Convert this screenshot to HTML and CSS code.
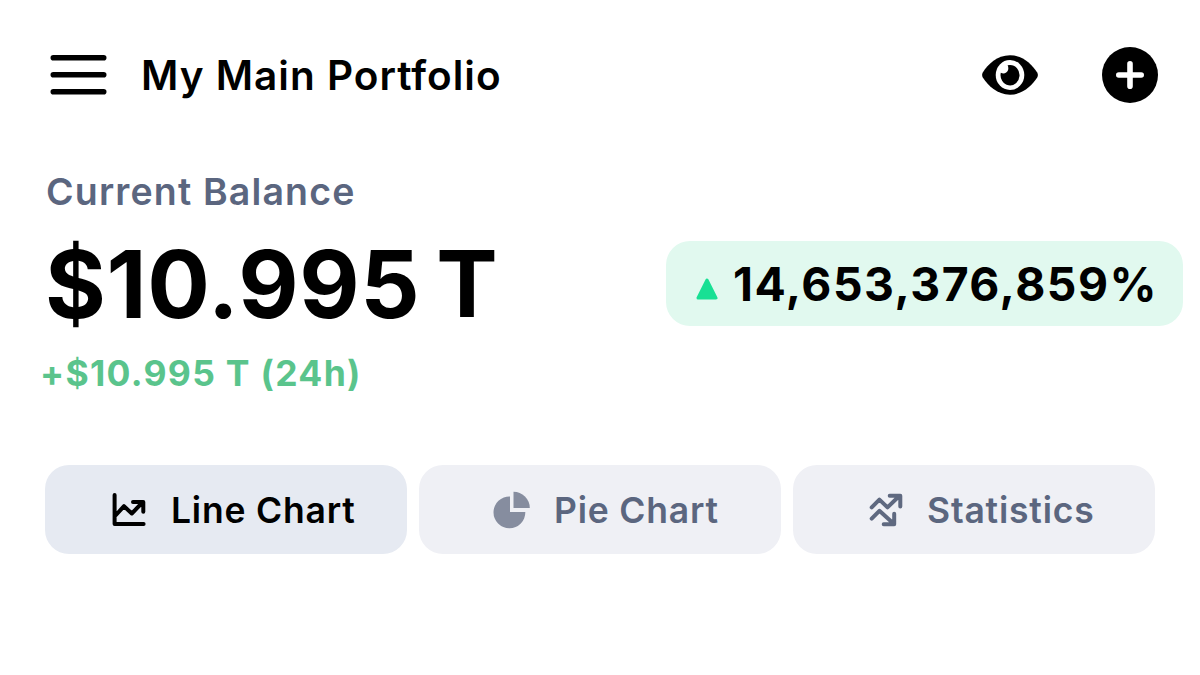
FILE: index.html
```html
<!DOCTYPE html>
<html lang="en">
<head><meta charset="utf-8"><title>Portfolio</title><link rel="stylesheet" href="styles.css"></head>
<body>
<header class="topbar">
<svg class="menu" width="58" height="42" viewBox="0 0 58 42" stroke="#000" stroke-width="5.6" stroke-linecap="round"><path d="M3.3 3.8H53.7M3.3 20.8H53.7M3.3 37.8H53.7"/></svg>
<h1 class="title">My Main Portfolio</h1>
<svg class="eye" width="56" height="40" viewBox="0 0 56 40"><path d="M28 .3C15 .3 6 9.5 .8 17.4Q-.6 20 .8 22.6C6 30.5 15 39.7 28 39.7S50 30.5 55.2 22.6Q56.6 20 55.2 17.4C50 9.5 41 .3 28 .3Z"/><ellipse cx="28" cy="20" rx="14.3" ry="15" fill="#fff"/><path d="M28 10A9.5 10.2 0 1 1 18.8 17.8C21.5 19.3 25 18.3 26 15.3C26.6 13.3 26.3 11.5 25.6 10.3Q26.7 10 28 10Z"/></svg>
<svg class="plus" width="56" height="56" viewBox="0 0 56 56"><circle cx="28" cy="28" r="28"/><path d="M28 16.8V39.2M16.8 28H39.2" stroke="#fff" stroke-width="5.6" stroke-linecap="round"/></svg>
</header>
<section class="balance">
<div class="label">Current Balance</div>
<div class="row">
<div class="amount"><span>$10.995</span><span class="unit">T</span></div>
<div class="badge"><svg class="up" width="22" height="22" viewBox="0 0 22 22"><path d="M11 2L20 20H2Z" fill="#18e094" stroke="#18e094" stroke-width="3" stroke-linejoin="round"/></svg><span>14,653,376,859%</span></div>
</div>
<div class="change">+$10.995 T (24h)</div>
</section>
<nav class="tabs">
<button class="tab active"><svg width="38" height="38" viewBox="0 0 38 38" fill="none" stroke="#000" stroke-width="4" stroke-linecap="round" stroke-linejoin="round"><path d="M4.6 4V33H33.6M5.5 24.5L14 15.2L21.8 22.5L32.4 11.5M23 11H33.3V20.8"/></svg><span>Line Chart</span></button>
<button class="tab pie"><svg width="38" height="38" viewBox="0 0 38 38" fill="#868d9f"><path d="M17 5.5A15.9 15.9 0 1 0 32.3 21H17Z"/><path d="M20.5 .8A16.5 16.5 0 0 1 36.8 17H20.5Z"/></svg><span>Pie Chart</span></button>
<button class="tab stats"><svg width="38" height="38" viewBox="0 0 38 38" fill="none" stroke="#5f6980" stroke-width="4" stroke-linecap="round" stroke-linejoin="round"><path d="M4.7 16.4L12.4 8.6L20.5 16.4L32.5 4.8M22.7 4.8H33.3V15.5M4.7 27.6L12.4 19.8L27 33M27.2 22.8V33.3H16.7"/></svg><span>Statistics</span></button>
</nav>
</body>
</html>
```
FILE: styles.css
```css
*{box-sizing:border-box}
body{margin:0;height:675px;overflow:hidden;background:#fff;font-family:Inter,sans-serif;color:#000}
.topbar{display:flex;align-items:center;height:150px;padding:0 42px 0 50px}
.title{margin:0 auto 0 33px;font-size:40.5px;font-weight:600;letter-spacing:1px}
.eye{margin-right:64px}
.balance{height:315px;padding:18px 17px 0 46px}
.label{font-size:37.5px;line-height:48px;font-weight:600;color:#5b667f;letter-spacing:1.15px}
.row{display:flex;justify-content:space-between;align-items:center;height:135px}
.amount{display:flex;gap:19px;margin-left:-1px;font-size:93px;font-weight:700;letter-spacing:.6px}
.unit{font-size:92px;margin-left:-3px}
.badge{display:flex;align-items:center;gap:15px;width:517px;height:85px;padding:0 0 0 30px;background:#e1f9ef;border-radius:24px;font-size:46.3px;font-weight:700;letter-spacing:1.5px;white-space:nowrap}
.up{margin-top:11px}
.change{margin:1px 0 0 -6px;font-size:35.5px;font-weight:700;letter-spacing:1.3px;color:#5ac48c}
.tabs{display:flex;gap:12px;padding:0 45px}
.tab{display:flex;align-items:center;width:362px;height:89px;border:0;border-radius:24px;background:#eff0f5;padding:0 0 0 65px;gap:23px;font:600 35.5px Inter,sans-serif;letter-spacing:.8px;color:#5b667f;white-space:nowrap}
.tab span{padding-top:1px}
.pie{padding-left:74px}
.stats{padding-left:74px;gap:22px}
.active{background:#e6eaf2;color:#000}
```
